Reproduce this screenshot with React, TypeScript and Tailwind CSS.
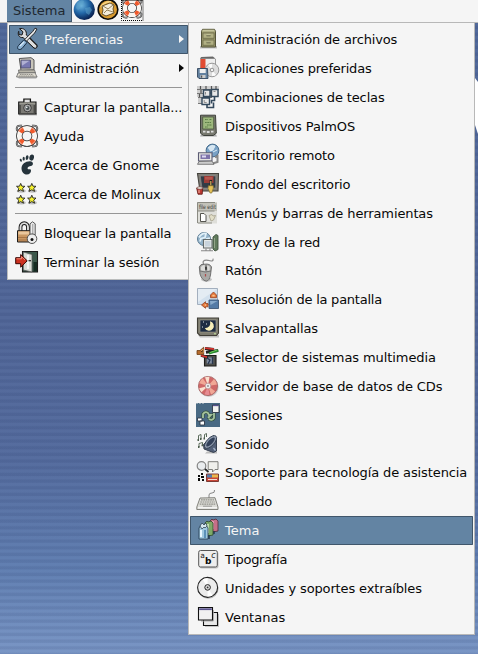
import React from 'react';

const O = '#1a1a1a';

const Lifebuoy = () => (
  <>
    <path d="M2 7Q.5.5 7 1.8M17 1.8Q23.5.5 22 7M22 17Q23.5 23.5 17 22.2M7 22.2Q.5 23.5 2 17" fill="none" stroke="#333" strokeWidth="1.9" />
    <path d="M2 7Q.5.5 7 1.8M17 1.8Q23.5.5 22 7M22 17Q23.5 23.5 17 22.2M7 22.2Q.5 23.5 2 17" fill="none" stroke="#ccc" strokeWidth=".7" />
    <circle cx="12" cy="12" r="7.7" fill="none" stroke={O} strokeWidth="6.2" />
    <circle cx="12" cy="12" r="7.7" fill="none" stroke="#f8f5f0" strokeWidth="4.8" />
    <circle cx="12" cy="12" r="7.7" fill="none" stroke="#f0592b" strokeWidth="4.8" strokeDasharray="4.6 7.495" strokeDashoffset="-3.75" />
    <circle cx="12" cy="12" r="9.4" fill="none" stroke="#fff" strokeWidth=".7" opacity=".5" />
  </>
);

const Star = ({ x, y }: { x: number; y: number }) => (
  <>
    <ellipse cx={x + 0.6} cy={y + 3.4} rx="4.5" ry="1.7" fill="#999" opacity=".6" />
    <path
      transform={`translate(${x} ${y})`}
      d="M0-4.2 1.2-1.4 4.2-1.3 1.9.8 2.8 3.8 0 2.2-2.8 3.8-1.9.8-4.2-1.3-1.2-1.4Z"
      fill="#f6f22c"
      stroke="#222"
      strokeWidth=".9"
      strokeLinejoin="round"
    />
  </>
);

const icons: Record<string, React.ReactNode> = {
  tools: (
    <>
      <path d="M14 13 20 19" stroke={O} strokeWidth="5.2" strokeLinecap="round" />
      <path d="M4.5 1.7 8 4.8 7 8 4 7.6 3.7 4.3C2.3 7.7 4.2 11 8 10.5L19 21Q22.5 22 21.8 18.4L11.3 8C12 3.5 8.7.7 4.5 1.7Z" fill="#ddd" stroke={O} strokeWidth="1" />
      <path d="m22 2-2-.8-2.3 3.3-8 8 1.8 1.6 8-8Z" fill="#eee" stroke={O} strokeWidth=".9" />
      <path d="M3.5 18.5 9 12.7 12 15.5 7 21.5C4 24 1 21.5 3.5 18.5Z" fill="#8db2d3" stroke="#172b40" strokeWidth="1" />
      <path d="m5 19 4-4" stroke="#d4e6f5" strokeWidth="1.3" />
    </>
  ),
  computer: (
    <>
      <path d="M2 20.5H23L21 22.8H4Z" fill="#aaa" opacity=".7" />
      <path d="m4.3 2.5 11.7-.8 3 2.2v10L6 14.5Z" fill="#c8c5ba" stroke="#555" />
      <path d="M6 4.2h9.5v7.8H6Z" fill="#7878b0" stroke="#50506e" strokeWidth=".9" />
      <path d="M6.7 4.8h7.8l-7.5 5Z" fill="#b0b0d2" />
      <path d="M3.5 14h16l1 3H4Z" fill="#b9b6aa" stroke="#666" strokeWidth=".8" />
      <path d="m3 17 17-.3 2 4.3H1.5Z" fill="#dedbd1" stroke="#666" strokeWidth=".8" />
      <path d="M5 18.5h13M4 20h15" stroke="#929089" strokeDasharray="1.5 .7" />
    </>
  ),
  camera: (
    <>
      <path d="M4 18h18v2.5H4Z" fill="#bbb" />
      <path d="M8.8 7V4h6.7v3h5.5v12H3.7V7Z" fill="#7b7a75" stroke="#161616" strokeWidth="1.1" />
      <path d="M9.8 4.8h4.7V7H9.8Z" fill="#ddd" />
      <path d="M4.5 7.7h15.7v1.5H4.5Z" fill="#9b9a92" />
      <path d="M5 10v8M19.5 10v8" stroke="#4b4b48" strokeWidth="1.8" />
      <circle cx="12.5" cy="13" r="3.8" fill="#aaa" stroke="#333" strokeWidth=".9" />
      <circle cx="12.5" cy="13" r="2" fill="#454c4e" />
      <circle cx="11.7" cy="12.3" r=".9" fill="#e7eeee" />
    </>
  ),
  lifebuoy: <Lifebuoy />,
  foot: (
    <g fill="#26343c">
      <ellipse cx="16.8" cy="4.6" rx="2.3" ry="3.1" transform="rotate(12 17 4)" />
      <ellipse cx="12.2" cy="4.6" rx="1.4" ry="2.3" transform="rotate(10 12 4)" />
      <ellipse cx="8.7" cy="5.7" rx="1.1" ry="1.9" />
      <ellipse cx="5.7" cy="7.5" rx="1" ry="1.5" transform="rotate(-20 5 7)" />
      <path d="M11.5 8.8C16 7.2 18.7 8.7 17.8 11.5 17 14 12.6 12.7 12.6 15.3 12.6 17.5 15.7 14.8 16 17.3 16.2 20 14 22 11 21.5 6 20.5 4 11.8 11.5 8.8Z" />
    </g>
  ),
  stars: (
    <>
      <Star x={5.7} y={5.6} />
      <Star x={16.8} y={5.6} />
      <Star x={5.7} y={17.4} />
      <Star x={16.8} y={17.4} />
    </>
  ),
  lock: (
    <>
      <path d="M5.5 11V6.3a3.6 4 0 0 1 7.5 0V11" fill="none" stroke={O} strokeWidth="3.8" />
      <path d="M5.5 11V6.3a3.6 4 0 0 1 7.5 0V11" fill="none" stroke="#ddd" strokeWidth="1.9" />
      <path d="M2.5 9.7h13V21h-13Z" fill="#c99762" stroke={O} strokeWidth="1" />
      <path d="M3.3 10.5h11v3h-11Z" fill="#eac79d" />
      <path d="M3 16.5h12M3 19h12" stroke="#a77546" />
      <path d="m15 2.8 2.5-2 2.7 2v11H15Z" fill="#ececec" stroke="#444" strokeWidth=".9" />
      <path d="M17.8 3v11" stroke="#999" />
      <circle cx="17" cy="17.7" r="4.8" fill="#ededed" stroke="#444" strokeWidth=".9" />
      <circle cx="17" cy="18.4" r="1.5" fill="#111" />
    </>
  ),
  exit: (
    <>
      <path d="M7.5 1.5h15v20.5h-15Z" fill="#3b574a" stroke={O} strokeWidth="1.1" />
      <path d="M18.5 12h3.5v9.5h-3.5Z" fill="#152b22" />
      <path d="M8.3 2 17 4.5V22L8.3 20Z" fill="#d8dcd5" stroke="#555" strokeWidth=".7" />
      <path d="M13 5v14" stroke="#f4f4f4" strokeWidth="2" />
      <path d="M13.5 10.7h2.5" stroke="#222" strokeWidth="1.2" />
      <path d="M.7 7.7h5V4.5l6.5 6.3-6.5 6.4v-3.5h-5Z" fill="#cc3120" stroke="#3b0703" strokeWidth="1" />
      <path d="M1.5 8.8h5V6.7l3.5 3.2" stroke="#f48a75" fill="none" />
    </>
  ),
  cabinet: (
    <>
      <path d="M4 19h17v2.5H4Z" fill="#999" opacity=".6" />
      <path d="M6.5 2.3h12l1 2V20h-14V4.3Z" fill="#97966a" stroke="#55543a" strokeWidth="1" />
      <path d="M6.7 2.8h11.5l.6 1.8H6Z" fill="#c6c59e" />
      <path d="M7 6h11v5.3H7ZM7 13h11v5.3H7Z" fill="#b1b084" stroke="#6c6b49" strokeWidth=".8" />
      <path d="M10.5 8.6h4M10.5 15.5h4" stroke="#4f4e35" strokeWidth="1.4" />
      <path d="M10.5 8h4M10.5 15h4" stroke="#dedfb5" strokeWidth=".7" />
    </>
  ),
  apps: (
    <>
      <path d="m5 1.5 12-.5 2.5 2v11H4.5Z" fill="#eee" stroke="#888" strokeWidth=".8" />
      <path d="m5.5 1 11.5-.2 2 2H4Z" fill="#666" />
      <path d="M4.5 3h5v10h-5Z" fill="#e24c33" />
      <circle cx="16" cy="14" r="6.8" fill="#dcdcdc" stroke="#909090" strokeWidth=".9" />
      <path d="m16 14-4-5a6 6 0 0 1 4-1ZM16 14l4 5a6 6 0 0 1-4 1Z" fill="#fbfbfb" />
      <circle cx="16" cy="14" r="1.8" fill="#f2f2f2" stroke="#888" strokeWidth=".9" />
      <path d="M1.5 12.5h10l.5 10H3l-1.5-1.5Z" fill="#6482a0" stroke="#34485f" strokeWidth=".9" />
      <path d="M3.7 13h6v4h-6Z" fill="#f0f0f0" />
      <path d="M4.5 19h5v3h-5Z" fill="#ccc" />
      <path d="M5.7 19.5v2.2" stroke="#333" />
    </>
  ),
  keys: (
    <>
      <path d="M1 1h22v11H1ZM2 12h11v7H2Z" fill="#cfcfcf" />
      <path d="M1 4.5h22M1 8.5h14M2 12.5h14M2 18.5h6" stroke="#777" strokeWidth="1.2" />
      <path d="M4.5 1v3M10 1v3M15.5 1v3M20 1v3M5 5v3M3.5 9v3M10 5v3" stroke="#555" strokeWidth="1.2" />
      <path d="M7.5 5h6.5v6.5H7.5ZM15.5 4.5h6.5v7h-6.5ZM6 13h7.5v6.5H6Z" fill="#e8e8e8" stroke="#34495c" strokeWidth="1.4" />
      <path d="M14 8h1.5M18.5 12v3.5h-3v3M11 19.5v3h6.5v-5" fill="none" stroke="#34495c" strokeWidth="1.6" />
      <path d="M9.5 7v2.5M17.5 6.5h2M8.2 15v2.5h2.5" fill="none" stroke="#777" strokeWidth=".8" />
    </>
  ),
  palm: (
    <>
      <path d="M5 20.5h15l1 2H4Z" fill="#aaa" />
      <path d="M4.5 1.2h15l.8 18-3 2.3H7.5l-3-2.3Z" fill="#77786e" stroke="#3e413b" strokeWidth="1" />
      <path d="M6.7 3h11v12h-11Z" fill="#9db87d" stroke="#4a583e" strokeWidth=".8" />
      <path d="M9 5.5h3M13.5 5.5h2.5M9 8.5h6M11 11h5M9 13h3" stroke="#54773f" strokeDasharray="1.7 .6" strokeWidth=".9" />
      <path d="M7 17.7h2.5M15 17.7h2.5M10.8 18h2.8" stroke="#ddd" strokeWidth="1.8" />
    </>
  ),
  remote: (
    <>
      <circle cx="16.5" cy="7.5" r="6.4" fill="#7aa2c6" stroke="#446a8b" />
      <path d="M12 5q3-4 7-2l-2 4-3 1M17 9l4-2" fill="#d5e5f1" stroke="#ddecf5" />
      <path d="M19 14.5 21.5 13v6l-5 1.5" fill="none" stroke="#888" strokeWidth="2" />
      <path d="M2.5 9.7H16V18H2.5Z" fill="#e4e4e0" stroke="#5b5b73" strokeWidth="1.1" />
      <path d="M4.5 11.5h9.5V16H4.5Z" fill="#7d72a9" />
      <path d="M6 12.5h4v2H6Z" fill="#dfdaf3" />
      <path d="m3 18.5 13-.4 2 3.2H1.5Z" fill="#ccc" stroke="#666" strokeWidth=".8" />
    </>
  ),
  desktop: (
    <>
      <path d="M1.5 1.5h21L22 19H4Z" fill="#807e77" stroke="#44423c" strokeWidth="1.1" />
      <path d="M4.3 4h15.4v12H6Z" fill="#333c45" stroke="#999" strokeWidth=".5" />
      <path d="M8 4h9.5v7H8Z" fill="#9c3d37" />
      <path d="M9 5h7.5v2.7H9Z" fill="#b6564e" />
      <path d="M14.8 8v6" stroke="#222" strokeWidth="2.4" />
      <path d="M14.8 9v4.5" stroke="#c8a85b" strokeWidth="1.3" />
      <path d="M12.3 13.7h5v2.5L15.8 21H14L12 16.5Z" fill="#e6c258" stroke="#806e32" strokeWidth=".7" />
      <path d="M.7 16h6l-.5 6.2H2Z" fill="#bc3832" stroke="#6b211c" strokeWidth=".9" />
      <ellipse cx="3.8" cy="16" rx="3" ry="1.2" fill="#efeee8" stroke="#71413b" strokeWidth=".7" />
      <path d="M3 18v3" stroke="#f7b4a5" />
    </>
  ),
  menus: (
    <>
      <path d="M1 1.5h20v21H1Z" fill="#dfdfda" />
      <path d="M1 1.5h20v8.5H1Z" fill="#c3c2b9" />
      <path d="M1.5 22V1.5H19M1.5 10h17M2 22h14" stroke="#8b8b83" fill="none" />
      <text x="3" y="7.5" fontSize="6" textLength="17" lengthAdjust="spacingAndGlyphs" fill="#3c3c37">
        file edit
      </text>
      <path d="M4.5 12.5H8L10 14.5v6H4.5Z" fill="#fff" stroke="#44443e" strokeWidth=".9" />
      <path d="m13 14.5 3-1 1 1.5 2.5-.5-2 4.5-2.5 1Z" fill="#e2dec8" stroke="#aaa692" strokeWidth=".9" />
    </>
  ),
  proxy: (
    <>
      <circle cx="8" cy="9" r="6.5" fill="#93b3ca" stroke="#5d7c93" />
      <path d="M3 7.5q3-5 7-4l-1 4-4 1-1 3M10 9l4-1" fill="none" stroke="#e1f0f8" strokeWidth="1.8" />
      <path d="M7.5 9.5h8.5v8.5H7.5Z" fill="#e9ecea" stroke="#626969" strokeWidth="1.1" />
      <path d="M9 11h5.5v5.5H9Z" fill="#c8d3dc" />
      <path d="M5 20.8h12M10 18.5v2.3M14 18.5v2.3" stroke="#888" strokeWidth="1.1" />
      <path d="M17 7 20 4.5l2 1v14l-3 1.5-2-2Z" fill="#627c5d" stroke="#41533f" strokeWidth=".9" />
      <path d="M18.5 8v10" stroke="#93a58a" />
    </>
  ),
  mouse: (
    <>
      <path d="M8 7Q5 1.5 12 2.3q6 2 5-1.6" fill="none" stroke="#888" strokeWidth="1.2" />
      <ellipse cx="10.5" cy="21.5" rx="5.5" ry="2" fill="#c4c4c4" />
      <path d="M3.3 9Q4 5.8 8.7 6.2q5.2-.8 6.8 2.8L14.5 17q-1 5.8-4.3 6.2Q5.7 22 4 16Z" fill="#a9a9a6" stroke="#666" strokeWidth=".9" />
      <path d="M5 9Q7 6.7 8.7 7.2l.5 5.8-4.2-.5ZM11 7.2l2.7 1.3v4l-2.2.5Z" fill="#dcdcda" />
      <path d="M4 13q5 2 11 0M10 7v6" fill="none" stroke="#666" strokeWidth=".8" />
      <path d="M10 8.8v3" stroke="#333" strokeWidth="1.7" />
      <path d="M9.5 16v2.5" stroke="#ac4a4a" strokeWidth="1.2" />
    </>
  ),
  resolution: (
    <>
      <path d="M1.5 1.5h20v16h-20Z" fill="#d2e0ed" stroke="#9ba8b8" strokeWidth=".9" />
      <path d="M2 2h19L2 15Z" fill="#e4ecf3" />
      <path d="M13 13h9.5v8.5H13Z" fill="#547ba6" stroke="#3f5978" strokeWidth=".9" />
      <path d="M14 14h7.5l-7 4Z" fill="#8aabcb" />
      <path d="m14.5 8 3-3 3 3v2.7h-6Z" fill="#e5763a" stroke="#964522" strokeWidth=".8" />
      <path d="M16.3 7.8h2.4v1.7h-2.4Z" fill="#f8c38a" />
      <path d="m5.5 18 4-3.3v1.8H12v3.3H9.5v1.5Z" fill="#e5763a" stroke="#964522" strokeWidth=".8" />
      <path d="m8 18 2-1v2Z" fill="#f8c38a" />
    </>
  ),
  moon: (
    <>
      <path d="M2 19h21v2.5H4Z" fill="#aaa" opacity=".7" />
      <path d="M1.5 2h21v15l-2 2.5H4L1.5 17Z" fill="#7e7c70" stroke="#403e36" strokeWidth="1.1" />
      <path d="M4 4h16v12H4Z" fill="#1d2c43" stroke="#a19f8d" strokeWidth=".6" />
      <path d="M14 5.2A4.8 4.8 0 1 1 8.8 12.2Q15.5 11.5 14 5.2Z" fill="#f6eeb9" />
      <path d="M7 6h1M10 8h1M6 11h1" stroke="#dce4eb" />
      <path d="M18 17.8h2" stroke="#c6e89e" />
    </>
  ),
  media: (
    <>
      <path d="M1 5.5h3l3.7-3.3v9.3L4 9.5H1Z" fill="#b56a2c" stroke="#6b3c15" strokeWidth=".8" />
      <path d="M5 6 7 4v4" stroke="#eca15a" />
      <path d="M8.5 10.5h11.5V21H8.5Z" fill="#4c4c49" stroke="#1c1c1a" strokeWidth="1.1" />
      <path d="M10.7 12.5h6.5v6h-6.5Z" fill="#7e8b9e" />
      <path d="m5 10.5 7 2M9 3.5l9 1M10 7.3l12-1.8" stroke="#222" strokeWidth="2.8" />
      <path d="m5 10.5 6 1.7M9 3.2l9 1" stroke="#d5332d" strokeWidth="1.8" />
      <path d="m13 8.5 9.5-3" stroke="#288c30" strokeWidth="2.3" />
      <path d="m14 7.5 7-2.5" stroke="#6ccb58" />
      <path d="m11 13 3 2-2 4M16.5 12v7" stroke="#273650" strokeWidth="1.3" fill="none" />
    </>
  ),
  cd: (
    <>
      <circle cx="12.7" cy="13" r="10" fill="#aaa" opacity=".5" />
      <circle cx="12" cy="12" r="9.6" fill="#cf6868" stroke="#a26060" strokeWidth=".8" />
      <path d="m12 12-8.7-2.7a9 9 0 0 1 3.5-5ZM12 12l6-7a9 9 0 0 1 3 5.5ZM12 12l7.2 5.3a9 9 0 0 1-4.2 3.2Z" fill="#f1a896" />
      <path d="m12 12-3-8.7a9 9 0 0 1 4.5-.5ZM12 12l-6.5 6.3a9 9 0 0 1-2.3-4Z" fill="#fae0cf" />
      <path d="m12 12-3.5 8.3a9 9 0 0 0 5 .5Z" fill="#e68c92" />
      <circle cx="12" cy="12" r="2.9" fill="#eee" stroke="#b88" strokeWidth=".8" />
      <circle cx="12" cy="12" r=".9" fill="#888" />
    </>
  ),
  session: (
    <>
      <path d="M0 0h24v24H0Z" fill="#496983" />
      <path d="M0 0h8" stroke="#ddd" strokeDasharray="2 1" />
      <path d="M16.5 2H23v7.5h-6.5Z" fill="#f2f2ef" stroke="#303846" strokeWidth=".9" />
      <path d="M17 2.5h5.5" stroke="#57518e" strokeWidth="1.3" />
      <path d="M1.5 15H6v3H1.5ZM4 18h4.5v4H4Z" fill="#fff" stroke="#303846" strokeWidth=".9" />
      <path d="M7 15V11q2-3 5-1l1 2h2l-3 4M18 10v5q-2 3-5 1" fill="none" stroke="#33503c" strokeWidth="3.2" />
      <path d="M7 15V11q2-3 5-1l1 2h2l-3 3M18 10v5q-2 3-5 1" fill="none" stroke="#a5c39d" strokeWidth="1.8" />
    </>
  ),
  sound: (
    <>
      <path d="M2.5 8V3.5l2.5-1V7M8.5 6.5V2.5l2-1V5M3 15v-3.5l3.5-1V13" fill="none" stroke="#5d6d5d" />
      <path d="M1.5 8h1.5M4 7h1.5M7.5 6.5H9M2 15h1.5M5.5 13.3H7" stroke="#4c5c4c" strokeWidth="1.8" />
      <path d="M11 19.5h10v2H9Z" fill="#bbb" />
      <path d="M17.5 3.5 20.5 7v12l-3 1.5-9.5-3.5-.5-4.5Z" fill="#536078" stroke="#2b3545" strokeWidth=".9" />
      <ellipse cx="14.5" cy="10" rx="3.8" ry="8" transform="rotate(43 14.5 10)" fill="#8f9aad" stroke="#333f52" strokeWidth=".9" />
      <ellipse cx="14.5" cy="10" rx="2.2" ry="5.8" transform="rotate(43 14.5 10)" fill="#33415a" />
      <path d="m17.5 16 2 2.5" stroke="#aab7cc" strokeWidth="1.3" />
    </>
  ),
  access: (
    <>
      <circle cx="5.5" cy="6" r="4.3" fill="#e9ecee" stroke="#858585" strokeWidth="1.2" />
      <path d="m9 9 3.5 3" stroke="#252525" strokeWidth="1.8" />
      <path d="M12.2 1.7H22v7.8h-3L16.5 12V9.5h-4.3Z" fill="#f0f0ec" stroke="#72726d" strokeWidth=".9" />
      <path d="M5 13h2v2H5ZM2 15h2v2H2ZM5 16h3v2H5ZM2 18h2v3H2ZM6 19h2v2H6Z" fill="#080808" />
      <path d="M10.5 14h12v7.5h-12Z" fill="#c84637" stroke="#703029" strokeWidth=".9" />
      <path d="M11 14.5h5v3h-5Z" fill="#547fae" />
      <path d="M16 14.5h6v3h-6Z" fill="#e9b84f" />
      <path d="M12 19.5h9" stroke="#f1ddd3" />
    </>
  ),
  keyboard: (
    <>
      <path d="M13 9V6q0-2 3-2t2.5-3" fill="none" stroke="#888" />
      <path d="m4 9 15-.3 3 9.3v2.5H.8V18Z" fill="#dbdbd6" stroke="#777771" strokeWidth=".9" />
      <path d="M5 10.8h13M4.3 13h14.5M3.7 15.2h15.5" stroke="#92928b" strokeDasharray="1.7 .6" strokeWidth="1.2" />
      <path d="M2 18.8h19" stroke="#fff" />
      <path d="M7 17.2h9" stroke="#888" strokeWidth=".8" />
    </>
  ),
  theme: (
    <>
      <path d="m14 3 2-2 1 1 3-1 2 2v10l-5 1-3-3Z" fill="#c66f88" stroke="#4e2b38" strokeWidth=".8" />
      <path d="M17 3v8" stroke="#f1c8d5" />
      <path d="m9 5 2-2 1 1 3-1 2 2v12l-5 1-3-3Z" fill="#7eaa68" stroke="#2d4729" strokeWidth=".8" />
      <path d="M12 6v9" stroke="#d4ebc7" strokeWidth="1.5" />
      <path d="m3 10 2-3 2 1 3-1 2 3v11H3Z" fill="#9fc8df" stroke="#263e51" strokeWidth=".8" />
      <path d="m4 8 2-3 2 2 2-2 1 3-2 2-1-1-2 2Z" fill="#d5e7ef" stroke="#243744" strokeWidth=".7" />
      <path d="M5 12v7" stroke="#e8f7ff" strokeWidth="2" />
      <path d="M9 12v8" stroke="#5c91b8" strokeWidth="2" />
      <path d="M13 17v4M18 13v3" stroke="#1d3142" strokeWidth="1.3" />
    </>
  ),
  font: (
    <>
      <rect x="3.5" y="4.5" width="19" height="17" rx="2" fill="#c4c4c4" />
      <rect x="2.7" y="3.5" width="18.6" height="16.5" rx="1.8" fill="#eee" stroke="#555" />
      <text x="4.3" y="11" fontSize="7.5" fill="#222">a</text>
      <text x="9" y="16.5" fontSize="9" fontWeight="bold" fill="#080808">b</text>
      <text x="15.2" y="11" fontSize="8" fontStyle="italic" fill="#222">c</text>
    </>
  ),
  drive: (
    <>
      <circle cx="12.2" cy="12.4" r="10.4" fill="#bbb" />
      <circle cx="11.6" cy="11.4" r="10" fill="#ececec" stroke="#252525" strokeWidth="1.1" />
      <path d="m11.6 11.4-5-8a9 9 0 0 1 5-1ZM11.6 11.4l5 8a9 9 0 0 1-5 1Z" fill="#fff" />
      <circle cx="11.6" cy="11.4" r="2.8" fill="#ddd" stroke="#252525" />
      <circle cx="11.6" cy="11.4" r=".9" fill="#333" />
    </>
  ),
  windows: (
    <>
      <path d="M9 9h14v13H9Z" fill="#c4c4c4" />
      <path d="M7.5 7.5h14v13h-14Z" fill="#e8e8e8" stroke="#111" strokeWidth="1.1" />
      <path d="M17.3 5v11H5" stroke="#aaa" fill="none" />
      <path d="M2.5 2.5h14v12.5h-14Z" fill="#f1f1f1" stroke="#111" strokeWidth="1.1" />
      <path d="M3.2 4.2h12.6" stroke="#5b548e" strokeWidth="1.8" />
    </>
  ),
};

const Icon = ({ name }: { name: string }) => (
  <svg viewBox="0 0 24 24" className="mt-0.5 h-6 w-6 shrink-0">
    {icons[name]}
  </svg>
);

type RowProps = {
  icon: string;
  label: string;
  /** Pixels taken off the label's natural width. */
  tighten?: number;
  active?: boolean;
  arrow?: boolean;
  short?: boolean;
};

const Row = ({ icon, label, tighten = 0, active, arrow, short }: RowProps) => (
  <div
    className={`flex shrink-0 items-start rounded-[1px] pl-1.5 ${short ? 'h-7' : 'h-[29px]'} ${
      active ? 'bg-[#6384a3] text-[#f5f5f5] shadow-[inset_0_0_0_1px_#40566b]' : 'text-[#080808]'
    }`}
  >
    <Icon name={icon} />
    <span
      className="ml-[5px] flex-1 whitespace-nowrap leading-[29px]"
      style={{ letterSpacing: `${-tighten / label.length}px` }}
    >
      {label}
    </span>
    {arrow && (
      <svg viewBox="0 0 5 8" className="mr-1 mt-[10px] h-2 w-[5px]">
        <path d="M0 0 5 4 0 8Z" fill="currentColor" />
      </svg>
    )}
  </div>
);

const Separator = () => (
  <div className="mr-1.5 ml-1.5 h-2.5 shrink-0 pt-1">
    <div className="h-px bg-[#969696]" />
  </div>
);

const preferences: [string, string, number][] = [
  ['cabinet', 'Administración de archivos', 4],
  ['apps', 'Aplicaciones preferidas', 4.7],
  ['keys', 'Combinaciones de teclas', 3],
  ['palm', 'Dispositivos PalmOS', 2.2],
  ['remote', 'Escritorio remoto', 2],
  ['desktop', 'Fondo del escritorio', 3],
  ['menus', 'Menús y barras de herramientas', 3.5],
  ['proxy', 'Proxy de la red', 2],
  ['mouse', 'Ratón', 1],
  ['resolution', 'Resolución de la pantalla', 6],
  ['moon', 'Salvapantallas', 2],
  ['media', 'Selector de sistemas multimedia', 2.5],
  ['cd', 'Servidor de base de datos de CDs', 3.5],
  ['session', 'Sesiones', 0],
  ['sound', 'Sonido', 0],
  ['access', 'Soporte para tecnología de asistencia', 4],
  ['keyboard', 'Teclado', 1.7],
  ['theme', 'Tema', 0],
  ['font', 'Tipografía', 3],
  ['drive', 'Unidades y soportes extraíbles', 4.2],
  ['windows', 'Ventanas', 0],
];

const Panel = () => (
  <header className="flex h-[22px] items-start overflow-hidden bg-[#f5f5f5] pl-[7px]">
    <div className="h-[22px] w-[65px] border-r border-b border-[#40566b] bg-[#6384a3] pl-1.5 leading-[21px] text-[#202830]">
      Sistema
    </div>
    <svg viewBox="0 0 72 22" className="h-[22px] w-[72px]">
      <defs>
        <radialGradient id="globe" cx=".35" cy=".3" r=".75">
          <stop offset="0" stopColor="#71b8df" />
          <stop offset=".5" stopColor="#2368a8" />
          <stop offset="1" stopColor="#061a48" />
        </radialGradient>
      </defs>
      <circle cx="12.3" cy="9.5" r="10.6" fill="url(#globe)" />
      <path d="M5 3q4-4 7-2l-1 4-3 1 1 2-3 2-2-2ZM13 8l5-1 2 3-3 5-3-2Z" fill="#5ca2ca" opacity=".55" />
      <circle cx="36" cy="9.5" r="9.8" fill="#d99b31" stroke="#0b0b0b" strokeWidth="1.6" />
      <path d="M29 7q4-6 10-5" stroke="#f8d383" strokeWidth="1.8" fill="none" />
      <path d="m30 6 8-3 4 2-1 4 1 4-8 3-4-2 1-4Z" fill="#f4ecda" stroke="#5a451e" strokeWidth=".9" />
      <path d="m31 6 5 3 5-4M32 13l3-3 6 2" fill="none" stroke="#8a754b" strokeWidth=".9" />
      <svg x="49" y="-3.5" width="22" height="23" viewBox="0 0 24 24">
        <Lifebuoy />
      </svg>
      <path d="M49.5 0v20.5h21.5V0" fill="none" stroke="#000" strokeDasharray="1 1" />
      <path d="M49.5.5H71" stroke="#000" strokeDasharray="1 1" />
    </svg>
  </header>
);

export default function App() {
  return (
    <div
      className="relative h-[654px] w-[478px] overflow-hidden bg-[repeating-linear-gradient(180deg,rgba(20,36,84,0.1)_0px,rgba(20,36,84,0.1)_2px,transparent_3px,transparent_5px,rgba(20,36,84,0.1)_6.67px),linear-gradient(180deg,#526a9b_0px,#536899_320px,#566d9f_460px,#6280b2_570px,#7a96c5_654px)] text-[13px] [font-family:'DejaVu_Sans',sans-serif]"
    >
      <svg viewBox="0 0 3 60" className="absolute top-[77px] right-0 h-[60px] w-[3px]">
        <path d="M0 1 3 5V57L0 48Z" fill="#fff" />
      </svg>
      <Panel />
      <main className="relative flex items-start border-t border-[#b8b8b8] pl-[7px]">
        <nav className="flex h-[257px] w-[181px] flex-col border-b border-l border-[#bbbdbd] bg-[#f5f5f5] pt-0.5 pl-px">
          <Row icon="tools" label="Preferencias" tighten={1} active arrow />
          <Row icon="computer" label="Administración" tighten={2} arrow />
          <Separator />
          <Row icon="camera" label="Capturar la pantalla..." tighten={4} />
          <Row icon="lifebuoy" label="Ayuda" />
          <Row icon="foot" label="Acerca de Gnome" />
          <Row icon="stars" label="Acerca de Molinux" tighten={2.5} />
          <Separator />
          <Row icon="lock" label="Bloquear la pantalla" tighten={3.5} />
          <Row icon="exit" label="Terminar la sesión" tighten={2.5} />
        </nav>
        <nav className="flex h-[612px] w-[287px] flex-col border-r border-b border-l border-[#b8b8b8] bg-[#f5f5f5] px-px pt-0.5">
          {preferences.map(([icon, label, tighten], i) => (
            <Row
              key={icon}
              icon={icon}
              label={label}
              tighten={tighten}
              active={icon === 'theme'}
              short={i === 7 || i === 14}
            />
          ))}
        </nav>
      </main>
    </div>
  );
}
